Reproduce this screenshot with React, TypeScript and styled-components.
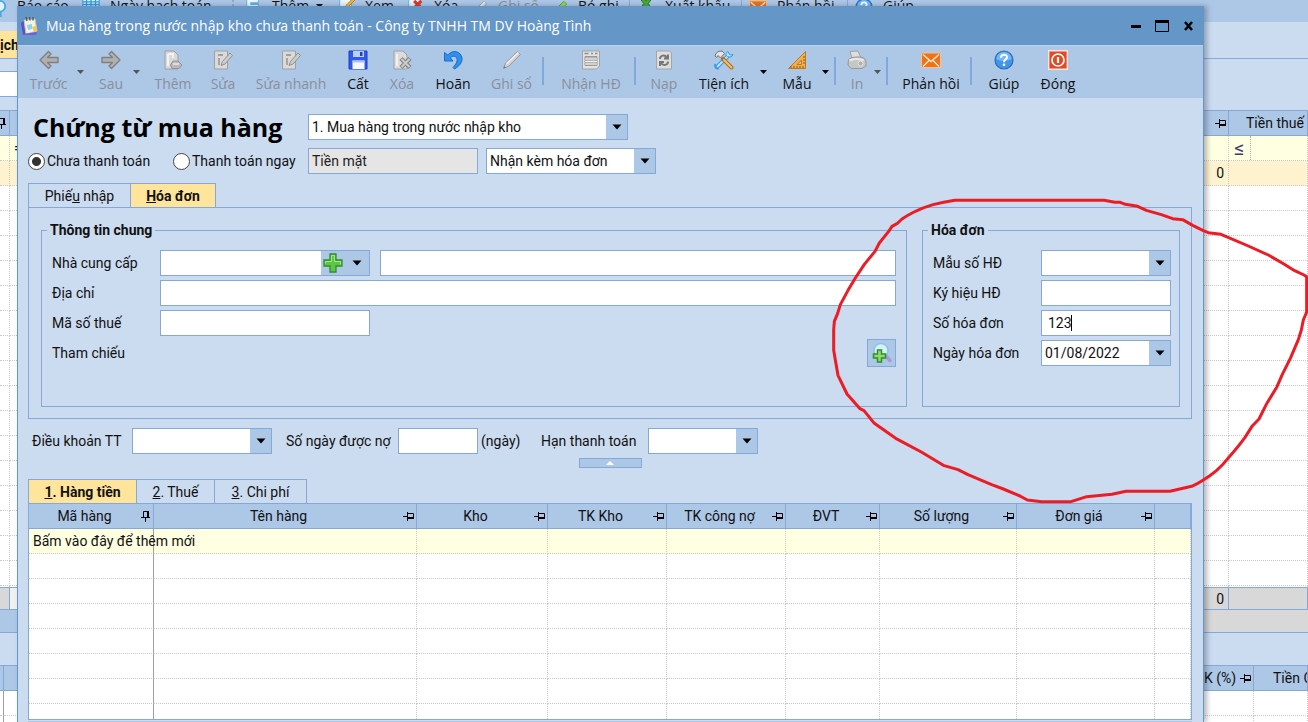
import React from "react";
import styled, { createGlobalStyle, css } from "styled-components";

const c = {
  title: "#6496c8",
  bar: "#adc7e7",
  body: "#cbdbf0",
  line: "#84a9d8",
  active: "#ffe49c",
  hint: "#ffffe1",
  dot: "#c9c9c9",
};
const sans = 'Roboto, "Liberation Sans", Arial, sans-serif';
const ui = '"Open Sans", "Noto Sans", sans-serif';

const Global = createGlobalStyle`
  * { box-sizing: border-box; }
  body { margin: 0; font: 14px/20px ${sans}; color: #111; overflow: hidden; }
  button, input, select { font: inherit; color: inherit; margin: 0; border-radius: 0; }
  button { border: 0; padding: 0; background: none; }
`;

const Desktop = styled.div`
  position: relative;
  height: 100vh;
  overflow: hidden;
  display: flex;
  flex-direction: column;
  background: ${c.body};
`;

/* ---------- window behind ---------- */
const BackBar = styled.div`
  flex: none;
  display: flex;
  align-items: flex-start;
  height: 22px;
  background: ${c.bar};
  font: 14px/12px ${ui};
  white-space: nowrap;
  overflow: hidden;
`;
const BackItem = styled.button<{ $w: number; $off?: boolean; $first?: boolean }>`
  flex: none;
  display: flex;
  width: ${(p) => p.$w}px;
  height: 12px;
  margin-right: 14px;
  margin-left: ${(p) => (p.$first ? "-11px" : "0")};
  color: ${(p) => (p.$off ? "#8b8f96" : "#111")};
  svg { flex: none; margin-right: 10px; }
  svg:last-child { margin: 4px 0 0 auto; }
`;
const BackSep = styled.span`
  flex: none;
  width: 1px;
  height: 14px;
  margin: 0 7px 0 -3px;
  background: ${c.line};
`;
const BackGrip = styled.span`
  flex: none;
  width: 6px;
  height: 14px;
  margin-right: 10px;
  border-right: 2px dotted #8fa9c8;
`;
const BackTabs = styled.div`
  flex: none;
  height: 37px;
  padding-top: 9px;
  border-bottom: 1px solid ${c.line};
`;
const BackTab = styled.button`
  width: 18px;
  height: 27px;
  background: ${c.active};
  font-weight: bold;
  text-align: right;
`;
const BackFilter = styled.div`
  flex: none;
  height: 51px;
  padding-top: 12px;
`;
const BackInput = styled.input`
  display: block;
  width: 18px;
  height: 26px;
  background: #fff;
  border: 1px solid ${c.line};
  border-left: 0;
`;
const BackGrid = styled.div<{ $h?: number }>`
  flex: ${(p) => (p.$h ? "none" : "1")};
  height: ${(p) => (p.$h ? p.$h + "px" : "auto")};
  min-height: 0;
  overflow: hidden;
  background: #fff;
`;
const Strip = styled.div`
  flex: none;
  display: flex;
  height: 23px;
  border-bottom: 1px solid ${c.line};
  background: linear-gradient(to right, ${c.bar} 18px, #d8d8d8 18px);
`;
const Spacer = styled.div`
  flex: none;
  height: 32px;
`;
const Operator = styled.span`
  display: block;
  width: 18px;
  height: 24px;
  margin-right: auto;
  padding-left: 1px;
  border-right: 1px dotted #aaa;
  color: #3b3b6b;
  font-size: 20px;
  line-height: 24px;
`;

/* ---------- tables ---------- */
const Table = styled.table`
  width: 100%;
  table-layout: fixed;
  border-collapse: separate;
  border-spacing: 0;
`;
const Th = styled.th<{ $indent?: number }>`
  position: relative;
  height: 26px;
  padding: 0 13px 0 ${(p) => p.$indent || 0}px;
  text-align: ${(p) => (p.$indent ? "left" : "center")};
  font-weight: normal;
  white-space: nowrap;
  overflow: hidden;
  background: ${c.bar};
  border: 1px solid ${c.line};
  border-left: 0;
  svg { position: absolute; right: 1px; top: 6px; }
`;
const Td = styled.td<{ $solid?: boolean; $right?: boolean }>`
  height: 25px;
  padding: 0 4px;
  white-space: nowrap;
  text-align: ${(p) => (p.$right ? "right" : "left")};
  border-right: 1px ${(p) => (p.$solid ? "solid #a0a0a0" : `dotted ${c.dot}`)};
  border-bottom: 1px dotted ${c.dot};
`;
const Tr = styled.tr<{ $bg?: string }>`
  background: ${(p) => p.$bg || "#fff"};
`;
const SumTd = styled.td<{ $bg?: string }>`
  height: 23px;
  padding: 0 4px;
  text-align: right;
  background: ${(p) => p.$bg || "#d8d8d8"};
  border: 1px solid ${c.line};
  border-left: 0;
`;

/* ---------- dialog ---------- */
const Dialog = styled.section`
  position: absolute;
  top: 6px;
  bottom: 0;
  left: 17px;
  right: 104px;
  display: flex;
  flex-direction: column;
  background: ${c.body};
  border: solid ${c.title};
  border-width: 0 1px;
  box-shadow: 3px 0 5px rgba(40, 50, 70, 0.35);
`;
const TitleBar = styled.header`
  flex: none;
  display: flex;
  align-items: center;
  gap: 8px;
  height: 39px;
  padding: 0 6px 0 2px;
  background: ${c.title};
  color: #fff;
  font: 14px/20px ${ui};
`;
const Title = styled.h1`
  flex: 1;
  margin: 0;
  font: inherit;
  white-space: nowrap;
`;
const WinButton = styled.button`
  width: 18px;
  height: 22px;
  svg { display: block; }
`;
const ToolBar = styled.nav`
  flex: none;
  display: flex;
  align-items: flex-start;
  height: 53px;
  padding: 4px 0 0 2px;
  background: ${c.bar};
  font: 14px/20px ${ui};
  border-top: 1px solid #bdd2ee;
`;
const ToolButton = styled.button<{ $w: number; $off?: boolean }>`
  flex: none;
  display: flex;
  flex-direction: column;
  align-items: center;
  gap: 4px;
  width: ${(p) => p.$w}px;
  margin: 0 10px;
  white-space: nowrap;
  color: ${(p) => (p.$off ? "#8a8f98" : "#111")};
`;
const Drop = styled.button<{ $off?: boolean }>`
  flex: none;
  width: 6px;
  height: 44px;
  margin-right: 6px;
  color: ${(p) => (p.$off ? "#555" : "#000")};
  svg { display: block; }
`;
const Sep = styled.span`
  flex: none;
  width: 2px;
  height: 28px;
  margin: 7px 4px 0 0;
  background: #7fa9dc;
`;

const Content = styled.div`
  flex: 1;
  min-height: 0;
  display: flex;
  flex-direction: column;
  padding: 16px 11px 0 10px;
`;
const Top = styled.div`
  display: grid;
  grid-template-columns: 280px 1fr;
  row-gap: 8px;
  align-items: center;
`;
const Heading = styled.h2`
  margin: 0;
  padding-left: 5px;
  font: bold 25px/26px ${ui};
  color: #000;
  white-space: nowrap;
`;
const Radios = styled.div`
  display: grid;
  grid-template-columns: 145px auto;
`;
const Radio = styled.label`
  display: flex;
  align-items: center;
  gap: 2px;
  white-space: nowrap;
`;
const RadioInput = styled.input`
  appearance: none;
  width: 17px;
  height: 17px;
  border: 1px solid #444;
  border-radius: 50%;
  background: #fff;
  &:checked { background: radial-gradient(circle, #333 4px, #fff 5px); }
`;
const Line = styled.div`
  display: flex;
  align-items: center;
  gap: 8px;
`;

const box = css`
  height: 26px;
  border: 1px solid ${c.line};
  background: #fff;
`;
const Input = styled.input<{ $w?: number }>`
  ${box}
  ${(p) => (p.$w ? `width: ${p.$w}px; flex: none;` : "flex: 1; min-width: 0;")}
  padding: 0 6px;
  outline: 0;
  &:disabled { background: #e5e5e5; color: #222; padding: 0 3px; }
`;
const Caret = styled.span`
  position: absolute;
  top: 5px;
  left: 30px;
  width: 1px;
  height: 16px;
  background: #000;
`;
const CaretField = styled.span`
  position: relative;
  flex: 1;
  min-width: 0;
  display: flex;
`;
const ComboBox = styled.span<{ $w?: number }>`
  ${box}
  position: relative;
  display: flex;
  ${(p) => (p.$w ? `width: ${p.$w}px; flex: none;` : "flex: 1;")}
`;
const Select = styled.select`
  appearance: none;
  flex: 1;
  min-width: 0;
  padding: 0 24px 0 3px;
  border: 0;
  outline: 0;
  background: linear-gradient(to left, ${c.bar} 21px, #fff 21px);
`;
const ComboInput = styled.input`
  flex: 1;
  min-width: 0;
  padding: 0 4px;
  border: 0;
  outline: 0;
  background: #fff;
`;
const ComboArrow = styled.span`
  position: absolute;
  top: 0;
  right: 0;
  display: grid;
  place-items: center;
  width: 21px;
  height: 24px;
  pointer-events: none;
`;
const ComboButton = styled.button`
  display: grid;
  place-items: center;
  width: 24px;
  background: ${c.bar};
`;

const Tabs = styled.div<{ $mt?: number }>`
  flex: none;
  display: flex;
  height: 24px;
  margin-top: ${(p) => p.$mt || 0}px;
`;
const Tab = styled.button<{ $w: number; $on?: boolean }>`
  flex: none;
  width: ${(p) => p.$w}px;
  height: 24px;
  border: 1px solid ${c.line};
  border-bottom: 0;
  background: ${(p) => (p.$on ? c.active : c.body)};
  font-weight: ${(p) => (p.$on ? "bold" : "normal")};
  & + & { border-left: 0; }
`;
const Panel = styled.div`
  flex: none;
  display: flex;
  gap: 15px;
  padding: 12px 11px 11px 12px;
  border: 1px solid ${c.line};
`;
const Group = styled.fieldset<{ $w?: number }>`
  ${(p) => (p.$w ? `width: ${p.$w}px; flex: none;` : "flex: 1;")}
  min-width: 0;
  height: 187px;
  margin: 0;
  padding: 10px ${(p) => (p.$w ? 8 : 10)}px 0 10px;
  border: 1px solid ${c.line};
`;
const Legend = styled.legend`
  margin-left: -5px;
  padding: 0 3px;
  font-weight: bold;
  line-height: 20px;
`;
const Field = styled.div`
  display: flex;
  align-items: center;
  height: 26px;
  margin-bottom: 4px;
`;
const Label = styled.label<{ $w: number }>`
  flex: none;
  width: ${(p) => p.$w}px;
  white-space: nowrap;
`;
const Gap = styled.span<{ $w?: number }>`
  flex: ${(p) => (p.$w ? "none" : "1")};
  width: ${(p) => p.$w || 0}px;
`;
const FindButton = styled.button`
  display: grid;
  place-items: center;
  width: 29px;
  height: 28px;
  border: 1px solid ${c.line};
  background: ${c.bar};
`;
const Terms = styled.div`
  flex: none;
  display: flex;
  align-items: center;
  margin-top: 9px;
  padding-left: 4px;
`;
const Collapse = styled.button`
  flex: none;
  align-self: center;
  display: grid;
  place-items: center;
  width: 63px;
  height: 10px;
  margin: 4px 0 11px;
  border: 1px solid ${c.line};
  background: ${c.bar};
`;
const GridBox = styled.div`
  flex: 1;
  min-height: 0;
  overflow: hidden;
  margin-bottom: 1px;
  background: #fff;
  border: 1px solid ${c.line};
  border-top: 0;
`;
const FootLine = styled.div`
  flex: none;
  height: 1px;
  background: ${c.bar};
`;
const Marker = styled.svg`
  position: absolute;
  top: 190px;
  right: 0;
  pointer-events: none;
`;

/* ---------- icons ---------- */
const Down = () => (
  <svg width="10" height="6" viewBox="0 0 10 6"><path d="M0.5 0.5h9L5 5.500z" fill="#000" /></svg>
);
const SmallDown = () => (
  <svg width="7" height="4" viewBox="0 0 7 4"><path d="M0 0h7L3.500 4z" fill="currentColor" /></svg>
);
const Pin = ({ up }: { up?: boolean }) => (
  <svg width="12" height="12" viewBox="0 0 12 12" fill="none" stroke="#000">
    {up ? (
      <><path d="M3.500 7V1.500h5M1 7.500h9M5.500 8v4" /><path d="M8 1v7" strokeWidth="2" /></>
    ) : (
      <><path d="M0 6.500h4M4.500 2v9M4 3.500h6.500V9" /><path d="M4 8h7" strokeWidth="2" /></>
    )}
  </svg>
);

const Page = ({ off }: { off?: boolean }) => (
  <path d="M3 1h9l4 4v14H3z" fill={off ? "#dcdcdc" : "#e8f6ff"} stroke={off ? "#a9a9a9" : "#5cb0e0"} />
);
const icons: Record<string, React.ReactNode> = {
  left: <path d="M9.500 1.500 1 10l8.500 8.500 2.500-2.500-3.500-3.500H19v-5H8.500L12 4z" fill="#b0b0b0" stroke="#808080" strokeWidth="1.400" strokeLinejoin="round" />,
  right: <path d="M10.500 1.500 19 10l-8.500 8.500L8 16l3.500-3.500H1v-5h10.500L8 4z" fill="#b0b0b0" stroke="#808080" strokeWidth="1.400" strokeLinejoin="round" />,
  add: <><path d="M2 1h9l4 4v14H2z" fill="#d9d9d9" stroke="#a0a0a0" /><path d="M5 4v12M5 4h5v4" fill="none" stroke="#f2f2f2" strokeWidth="2" /><path d="M10 11h5l4 4-3 3.500H9L7.500 15z" fill="#b9b9b9" stroke="#959595" /><path d="M10 14h6" stroke="#dedede" strokeWidth="2" /></>,
  edit: <><path d="M1.500 1h13v18h-13z" fill="#dadada" stroke="#a0a0a0" /><path d="M5 5h5M6 8v7" stroke="#a0a0a0" strokeWidth="1.800" /><path d="m8 15.500 1.500-4L17 3l2.500 2.500-7.500 8.500z" fill="#cdcdcd" stroke="#909090" /></>,
  save: <><path d="M1 1h18v18H1z" fill="#2f5be8" stroke="#1b3fcb" /><path d="M5 1h11v6H5z" fill="#bcd0ff" /><path d="M12 2h2.500v4H12z" fill="#1b3fcb" /><path d="M4.500 10.500h12V19h-12z" fill="#f6f8ff" /><path d="M4.500 10.500h12v2h-12z" fill="#a9c2ff" /></>,
  del: <><path d="M2 1h9l4 4v14H2z" fill="#dcdcdc" stroke="#a0a0a0" /><path d="M5 4v12" stroke="#f0f0f0" strokeWidth="2" /><path d="m9 8.500 9 9M18 8.500l-9 9" stroke="#858585" strokeWidth="4.500" /><path d="m9.500 9 8 8M17.500 9l-8 8" stroke="#cdcdcd" strokeWidth="2" /></>,
  undo: <path d="M1.500 2.500v8.500H10L7.300 7.800c2.500-2.300 6-2 6.700 1 .6 2.700-.8 5.300-4 8.700l1.500 1.500c5-3 8-6.500 7.500-11C17.800 1.300 10-1 4.800 5z" fill="#2f8fee" stroke="#1c6cc9" strokeLinejoin="round" />,
  pen: <><path d="m1.500 18.500 2-5.500L15.500 1.500l3 3L7 16z" fill="#d2d2d2" stroke="#9a9a9a" /><path d="m1.500 18.500.8-2.500 1.700 1.500z" fill="#777" /><path d="M4 13.500 15.800 2l1 1L5 14.500z" fill="#f1f1f1" /></>,
  invoice: <><path d="M1.500 1h17v15l-3 3h-14z" fill="#e2e2e2" stroke="#a2a2a2" /><path d="M3.500 3.500h4M10 3.500h2M14 3.500h2.500" stroke="#8b8b8b" strokeWidth="1.500" /><path d="M4 6.500h12v9H4z" fill="#b5b5b5" stroke="#999" /><path d="M4 9h12M4 11.500h12M4 14h12" stroke="#eee" /></>,
  reload: <><path d="M2.500 1h13l2 2v16h-15z" fill="#dedede" stroke="#a5a5a5" /><path d="M6 9c0-4 5-4.500 7-1.500M14 4.500V8.500h-4M14 11.500c0 4-5 4.500-7 1.500M6 16v-4h4" fill="none" stroke="#777" strokeWidth="2" /></>,
  tools: <><path d="M3 17 14.500 5.500" stroke="#3b9be0" strokeWidth="4" strokeLinecap="round" /><path d="M3.500 16.500 14.500 5.500" stroke="#b8e4ff" strokeWidth="2" strokeLinecap="round" /><path d="M14 1.500c-2.500 1-2.500 4-.5 5s5 .5 5.500-2l-2.500.5-1.500-1.200z" fill="#b8e4ff" stroke="#3b9be0" /><path d="M1.500 14c-1 2 0 4.500 3 5" fill="none" stroke="#3b9be0" strokeWidth="2" /><path d="m9 9 8.500 8.500" stroke="#b5711d" strokeWidth="4" strokeLinecap="round" /><path d="m10 10 7.500 7.500" stroke="#f1c16d" strokeWidth="1.800" strokeLinecap="round" /><path d="M1 6C1.500 3 4 .8 8 1l2.500 2.500L6.500 8 4 5.500 2.500 7.500z" fill="#e4e4e4" stroke="#6f6f6f" /></>,
  ruler: <><path d="M18.500 1.500V18.500H1.500z" fill="#f2b04a" stroke="#bf7a1c" strokeLinejoin="round" /><path d="M14.500 10v4.500H10z" fill="#adc7e7" stroke="#bf7a1c" /><path d="M4 18v-2M7 18v-2M10 18v-2M13 18v-2M16 18v-2M18 13h-2M18 10h-2M18 7h-2" stroke="#8c5512" /></>,
  print: <><path d="m3 1.500 8-.5 3 7H5z" fill="#dedede" stroke="#a3a3a3" /><path d="M1.500 9.500C4 7 12 6 17 8l2 3v5l-4 2.500H4L1 15z" fill="#c6c6c6" stroke="#999" /><path d="M2.500 10.500c4-2 10-2 14 0" stroke="#ececec" strokeWidth="2" fill="none" /><circle cx="13.500" cy="13.500" r="2.500" fill="#b0b0b0" stroke="#e4e4e4" /></>,
  mail: <><path d="M.5 3h19v14.500H.5z" fill="#ef7216" stroke="#f8c28c" /><path d="m2 4.500 8 7 8-7M2 16.500l6-6M18 16.500l-6-6" fill="none" stroke="#ffe9d0" strokeWidth="1.400" /></>,
  help: <><circle cx="10" cy="10" r="9" fill="#3f97ec" stroke="#2b6cb8" strokeWidth="1.200" /><path d="M2.500 9a7.500 7 0 0 1 15 0c-4 2.500-11 2.500-15 0z" fill="#8cc6fa" opacity=".7" /><path d="M7 7.800c0-4 6-4 6-.6 0 2-3 2.300-3 5" fill="none" stroke="#fff" strokeWidth="2" /><circle cx="10" cy="14.800" r="1.300" fill="#fff" /></>,
  power: <><path d="M.7.7h18.600v18.600H.7z" fill="#e24a26" stroke="#fbe3dc" strokeWidth="1.400" /><circle cx="10" cy="10" r="6" fill="none" stroke="#fff" strokeWidth="1.700" /><path d="M10 7v6" stroke="#fff" strokeWidth="2.200" /></>,
  search: <><circle cx="12" cy="5" r="6" fill="#dff3ff" stroke="#4aa9e0" strokeWidth="2" /><path d="M12 11v6" stroke="#4aa9e0" strokeWidth="4" /></>,
  calendar: <><path d="M1 0h18v10H1z" fill="#eaf4ff" stroke="#2b7fd0" /><path d="M1 1h18M1 4h18M1 7h18M5 0v10M10 0v10M15 0v10" stroke="#2b9be0" strokeWidth="1.500" /></>,
  page: <><Page /><path d="M7 10h9" stroke="#5cb0e0" strokeWidth="3" /></>,
  pageEdit: <><Page /><path d="m10 12 8-8 2 2-8 8z" fill="#f3b73b" stroke="#b87d1a" /></>,
  pageDel: <><Page /><path d="m9 8 8 8M17 8l-8 8" stroke="#e0362c" strokeWidth="3.500" /></>,
  greenPen: <path d="m1.500 18.500 2-5.500L15.500 1.500l3 3L7 16z" fill="#8fe04a" stroke="#4c9c22" />,
  excel: <path d="M1 1h5l4 6 5-6h4l-6.500 9 6 9h-5L10 13l-4 6H1l6.500-9z" fill="#47a83a" stroke="#1f6b1c" />,
};
const Icon = ({ n, s = 20, dy = 0 }: { n: string; s?: number; dy?: number }) => (
  <svg width={s} height={s} viewBox={`0 ${dy} 20 20`} aria-hidden="true">{icons[n]}</svg>
);
const Plus = () => (
  <svg width="20" height="20" viewBox="0 0 20 20"><path d="M7 1h6v6h6v6h-6v6H7v-6H1V7h6z" fill="#5fc645" stroke="#2f8f2a" strokeWidth="1.300" /><path d="M8.500 2.500h3v6h6v3M8.500 2.500v6h-6v2" fill="none" stroke="#a5e88f" /></svg>
);
const FindPlus = () => (
  <svg width="22" height="22" viewBox="0 0 22 22">
    <circle cx="10" cy="8.500" r="7" fill="#d8f0fb" stroke="#8bc3e6" strokeWidth="1.500" />
    <path d="m15.500 14.500 3.500 4" stroke="#a79be0" strokeWidth="3.500" strokeLinecap="round" />
    <path d="M6.500 8h4v4h4v4h-4v4h-4v-4h-4v-4h4z" fill="#8fdc6c" stroke="#2f8f2a" strokeWidth="1.500" />
  </svg>
);

/* ---------- pieces ---------- */
const Combo = ({ id, w, label, value }: { id?: string; w?: number; label?: string; value?: string }) => (
  <ComboBox $w={w}>
    <Select id={id} aria-label={label}><option>{value || ""}</option></Select>
    <ComboArrow><Down /></ComboArrow>
  </ComboBox>
);
const Tool = ({ n, w, off, children }: { n: string; w: number; off?: boolean; children: React.ReactNode }) => (
  <ToolButton $w={w} $off={off} disabled={off}><Icon n={n} />{children}</ToolButton>
);
const DropArrow = ({ off }: { off?: boolean }) => (
  <Drop $off={off} aria-label="Mở danh sách"><SmallDown /></Drop>
);

const columns: [string, number | undefined][] = [
  ["Mã hàng", 125], ["Tên hàng", 263], ["Kho", 131], ["TK Kho", 119], ["TK công nợ", 119],
  ["ĐVT", 94], ["Số lượng", 137], ["Đơn giá", 138], ["", undefined],
];

const BackCols = ({ a, b, d }: { a: number; b: number; d: number }) => (
  <colgroup><col style={{ width: a }} /><col /><col style={{ width: b }} /><col style={{ width: d }} /></colgroup>
);

const Background = () => (
  <>
    <BackBar>
      <BackItem $w={79} $first><Icon n="search" s={18} dy={-2} /><span>Báo cáo</span></BackItem>
      <BackItem $w={132}><Icon n="calendar" s={18} dy={2} /><span>Ngày hạch toán</span></BackItem>
      <BackGrip />
      <BackItem $w={79}><Icon n="page" s={18} dy={6} /><span>Thêm</span><SmallDown /></BackItem>
      <BackItem $w={55}><Icon n="pageEdit" s={18} dy={6} /><span>Xem</span></BackItem>
      <BackItem $w={50}><Icon n="pageDel" s={18} dy={7} /><span>Xóa</span></BackItem>
      <BackItem $w={66} $off><Icon n="pen" s={18} /><span>Ghi sổ</span></BackItem>
      <BackItem $w={68}><Icon n="greenPen" s={18} /><span>Bỏ ghi</span></BackItem>
      <BackSep />
      <BackItem $w={93}><Icon n="excel" s={18} dy={6} /><span>Xuất khẩu</span></BackItem>
      <BackSep />
      <BackItem $w={87}><Icon n="mail" s={18} dy={2} /><span>Phản hồi</span></BackItem>
      <BackSep />
      <BackItem $w={60}><Icon n="help" s={18} dy={2} /><span>Giúp</span></BackItem>
    </BackBar>
    <BackTabs><BackTab>ịch</BackTab></BackTabs>
    <BackFilter><BackInput aria-label="Lọc" /></BackFilter>
    <BackGrid>
      <Table>
        <BackCols a={10} b={26} d={79} />
        <thead>
          <tr><Th><Pin up /></Th><Th /><Th><Pin /></Th><Th $indent={17}>Tiền thuế GTGT</Th></tr>
        </thead>
        <tbody>
          <Tr $bg={c.hint}><Td /><Td>=</Td><Td /><Td><Operator>≤</Operator></Td></Tr>
          <Tr $bg="#fff3cf"><Td /><Td /><Td $right>0</Td><Td /></Tr>
          {Array.from({ length: 30 }, (_, i) => <Tr key={i}><Td /><Td /><Td /><Td /></Tr>)}
        </tbody>
      </Table>
    </BackGrid>
    <Table>
      <BackCols a={10} b={26} d={79} />
      <tbody><tr><SumTd /><SumTd $bg="#f0f0f0" /><SumTd>0</SumTd><SumTd /></tr></tbody>
    </Table>
    <Strip />
    <Spacer />
    <BackGrid $h={57}>
      <Table>
        <BackCols a={4} b={54} d={54} />
        <thead><tr><Th /><Th /><Th>K (%)<Pin /></Th><Th $indent={19}>Tiền CK</Th></tr></thead>
        <tbody>{[0, 1].map((i) => <Tr key={i}><Td $solid /><Td /><Td /><Td /></Tr>)}</tbody>
      </Table>
    </BackGrid>
  </>
);

export default function App() {
  return (
    <Desktop>
      <Global />
      <Background />
      <Dialog>
        <TitleBar>
          <svg width="18" height="20" viewBox="0 0 18 20">
            <path d="m1 7 4-4 3 15-5 1z" fill="#5a4fd0" /><path d="m4 4 11-1 2 12-11 3z" fill="#f5f2df" stroke="#c6c3a8" />
            <path d="m3 18 14-2-1 3H4z" fill="#6c5fe0" /><path d="m6 1 1 4M9.500 1l.5 3.500M13 1v3.500" stroke="#555" strokeWidth="1.300" /><path d="m7 9 5-1v5l-4 1z" fill="#8bd3f0" /><path d="m12 11 4-1 1 5-3 1z" fill="#f3c94b" />
          </svg>
          <Title>Mua hàng trong nước nhập kho chưa thanh toán - Công ty TNHH TM DV Hoàng Tình</Title>
          <WinButton aria-label="Thu nhỏ"><svg width="18" height="18" viewBox="0 0 18 18"><path d="M4 9.500h10" stroke="#000" strokeWidth="3" /></svg></WinButton>
          <WinButton aria-label="Phóng to"><svg width="18" height="18" viewBox="0 0 18 18"><path d="M2.500 4v10.500h13V4" fill="none" stroke="#000" /><path d="M2 4.500h14" stroke="#000" strokeWidth="3" /></svg></WinButton>
          <WinButton aria-label="Đóng cửa sổ"><svg width="18" height="18" viewBox="0 0 18 18"><path d="m6 5 7 8M13 5l-7 8" stroke="#000" strokeWidth="2.600" /></svg></WinButton>
        </TitleBar>
        <ToolBar>
          <Tool n="left" w={37} off>Trước</Tool><DropArrow off />
          <Tool n="right" w={24} off>Sau</Tool><DropArrow off />
          <Tool n="add" w={36} off>Thêm</Tool>
          <Tool n="edit" w={24} off>Sửa</Tool>
          <Tool n="edit" w={72} off>Sửa nhanh</Tool>
          <Tool n="save" w={22}>Cất</Tool>
          <Tool n="del" w={26} off>Xóa</Tool>
          <Tool n="undo" w={36}>Hoãn</Tool>
          <Tool n="pen" w={41} off>Ghi sổ</Tool>
          <Sep />
          <Tool n="invoice" w={66} off>Nhận HĐ</Tool>
          <Sep />
          <Tool n="reload" w={28} off>Nạp</Tool>
          <Tool n="tools" w={52}>Tiện ích</Tool><DropArrow />
          <Tool n="ruler" w={30}>Mẫu</Tool><DropArrow />
          <Sep />
          <Tool n="print" w={14} off>In</Tool><DropArrow off />
          <Sep />
          <Tool n="mail" w={58}>Phản hồi</Tool>
          <Sep />
          <Tool n="help" w={36}>Giúp</Tool>
          <Tool n="power" w={32}>Đóng</Tool>
        </ToolBar>
        <Content>
          <Top>
            <Heading>Chứng từ mua hàng</Heading>
            <Line><Combo w={320} label="Loại chứng từ" value="1. Mua hàng trong nước nhập kho" /></Line>
            <Radios>
              <Radio><RadioInput type="radio" name="pay" defaultChecked />Chưa thanh toán</Radio>
              <Radio><RadioInput type="radio" name="pay" />Thanh toán ngay</Radio>
            </Radios>
            <Line>
              <Input $w={170} disabled defaultValue="Tiền mặt" aria-label="Hình thức thanh toán" />
              <Combo w={170} label="Hóa đơn kèm theo" value="Nhận kèm hóa đơn" />
            </Line>
          </Top>
          <Tabs $mt={9}>
            <Tab $w={103}>Phiế<u>u</u> nhập</Tab>
            <Tab $w={85} $on><u>H</u>óa đơn</Tab>
          </Tabs>
          <Panel>
            <Group>
              <Legend>Thông tin chung</Legend>
              <Field>
                <Label $w={108} htmlFor="ncc">Nhà cung cấp</Label>
                <ComboBox $w={210}>
                  <ComboInput id="ncc" />
                  <ComboButton aria-label="Thêm nhà cung cấp"><Plus /></ComboButton>
                  <ComboButton aria-label="Chọn nhà cung cấp"><Down /></ComboButton>
                </ComboBox>
                <Gap $w={10} />
                <Input aria-label="Tên nhà cung cấp" />
              </Field>
              <Field><Label $w={108} htmlFor="dc">Địa chỉ</Label><Input id="dc" /></Field>
              <Field><Label $w={108} htmlFor="mst">Mã số thuế</Label><Input id="mst" $w={210} /></Field>
              <Field>
                <Label $w={108} htmlFor="tc">Tham chiếu</Label><Gap />
                <FindButton id="tc" aria-label="Tham chiếu"><FindPlus /></FindButton>
              </Field>
            </Group>
            <Group $w={258}>
              <Legend>Hóa đơn</Legend>
              <Field><Label $w={108} htmlFor="ms">Mẫu số HĐ</Label><Combo id="ms" /></Field>
              <Field><Label $w={108} htmlFor="kh">Ký hiệu HĐ</Label><Input id="kh" /></Field>
              <Field><Label $w={108} htmlFor="so">Số hóa đơn</Label><CaretField><Input id="so" defaultValue="123" /><Caret /></CaretField></Field>
              <Field><Label $w={108} htmlFor="ng">Ngày hóa đơn</Label><Combo id="ng" value="01/08/2022" /></Field>
            </Group>
          </Panel>
          <Terms>
            <Label $w={100} htmlFor="dk">Điều khoản TT</Label><Combo id="dk" w={140} />
            <Gap $w={14} />
            <Label $w={112} htmlFor="sn">Số ngày được nợ</Label><Input id="sn" $w={80} />
            <Gap $w={3} />
            <Label $w={60} htmlFor="sn">(ngày)</Label>
            <Label $w={107} htmlFor="han">Hạn thanh toán</Label><Combo id="han" w={110} />
          </Terms>
          <Collapse aria-label="Thu gọn"><svg width="8" height="4" viewBox="0 0 8 4"><path d="M0 4h8L4 0z" fill="#fff" /></svg></Collapse>
          <Tabs>
            <Tab $w={109} $on><u>1</u>. Hàng tiền</Tab>
            <Tab $w={78}><u>2</u>. Thuế</Tab>
            <Tab $w={92}><u>3</u>. Chi phí</Tab>
          </Tabs>
          <GridBox>
            <Table>
              <colgroup>{columns.map(([n, w]) => <col key={n} style={{ width: w }} />)}</colgroup>
              <thead>
                <tr>{columns.map(([n], i) => <Th key={i} scope="col">{n}{n && <Pin up={i === 0} />}</Th>)}</tr>
              </thead>
              <tbody>
                <Tr $bg={c.hint}>
                  {columns.map((_, i) => <Td key={i} $solid={i === 0}>{i === 0 && "Bấm vào đây để thêm mới"}</Td>)}
                </Tr>
                {Array.from({ length: 20 }, (_, r) => (
                  <Tr key={r}>{columns.map((_, i) => <Td key={i} $solid={i === 0} />)}</Tr>
                ))}
              </tbody>
            </Table>
          </GridBox>
          <FootLine />
        </Content>
      </Dialog>
      <Marker width="488" height="320" viewBox="0 0 1464 960" fill="none" stroke="#ed1c24" strokeWidth="9" strokeLinejoin="round" strokeLinecap="round">
        <path d="M852 31H405Q370 36 339 44 308 53 282 66 262 76 246 87L232 100 216 109 206 124 178 159 165 184 133 223 106 264 84 301 61 344 53 370 43 394 41 420V480L46 510 54 556 81 612 120 656 132 662 163 700 227 745 304 786 370 826 414 839 444 854 515 884 550 897 600 918 622 930 665 935H753L800 920 876 913 918 904H1050L1115 889Q1132 882 1150 870 1170 858 1190 841 1208 825 1224 805 1258 766 1275 742L1296 709 1317 687 1339 643 1371 590 1387 553 1411 505 1435 449 1444 420 1450 390 1460 366V260L1452 255 1424 242 1388 220 1345 195 1285 168 1203 133 1165 128 1150 122 1118 106 1088 89 1058 86 1024 74 979 61 953 49 916 43 901 37 885 37z" />
      </Marker>
    </Desktop>
  );
}
